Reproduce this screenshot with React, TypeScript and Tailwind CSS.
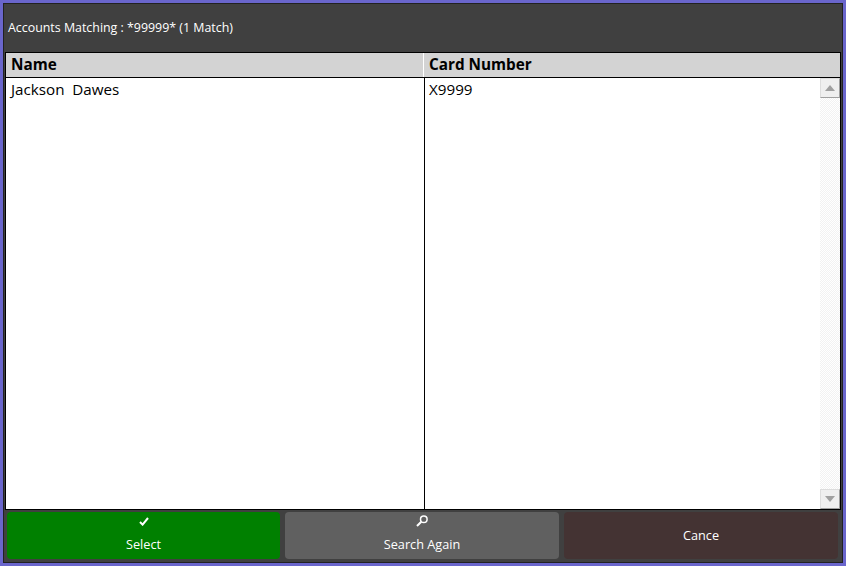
import * as React from "react";

const FooterButton = ({ label, icon, className }: { label: string; icon?: React.ReactNode; className: string }) => (
  <button className={`h-[47px] rounded-[4px] text-[12.7px] leading-[16px] text-white flex flex-col items-center ${className}`}>
    {icon ? (
      <>
        <span className="h-[12px] mt-[3px] flex items-center justify-center">{icon}</span>
        <span className="mt-[9px]">{label}</span>
      </>
    ) : (
      <span className="mt-[15px]">{label}</span>
    )}
  </button>
);

const scrollButton = "h-[20px] bg-[#efefef] border border-[#dddddd] border-r-[#a0a0a0] border-b-[#a0a0a0] flex items-center justify-center";

const App = () => {
  return (
    <div className="w-[846px] h-[566px] border-[3px] border-[#6a66cc] font-['Open_Sans','Noto_Sans',sans-serif] overflow-hidden">
      <div className="h-full border border-[#222222] bg-[#404040] flex flex-col">
        <div className="h-[48px] flex items-center pl-[4px] text-[12.4px] text-white shrink-0">
          Accounts Matching : *99999* (1 Match)
        </div>
        <div className="mx-[1px] flex-1 border border-black bg-white flex flex-col min-h-0">
          <div className="h-[25px] shrink-0 flex bg-[#d3d3d3] border-b border-black text-[15.3px] font-bold text-black">
            <div className="w-[418px] border-r border-white pl-[5px] leading-[23px]">Name</div>
            <div className="flex-1 pl-[5px] leading-[23px]">Card Number</div>
          </div>
          <div className="flex-1 flex min-h-0 text-[15.2px] text-black">
            <div className="w-[419px] border-r border-black pl-[5px] leading-[22px] whitespace-pre">Jackson  Dawes</div>
            <div className="flex-1 pl-[4px] leading-[22px]">X9999</div>
            <div className="w-[20px] shrink-0 flex flex-col justify-between bg-[repeating-conic-gradient(#f2f2f2_0_25%,#ffffff_0_50%)] bg-[length:2px_2px]">
              <div className={scrollButton}>
                <svg width="10" height="6" viewBox="0 0 10 6"><path d="M5 0 L10 6 L0 6 Z" fill="#a0a0a0" /></svg>
              </div>
              <div className={scrollButton}>
                <svg width="10" height="6" viewBox="0 0 10 6"><path d="M0 0 L10 0 L5 6 Z" fill="#a0a0a0" /></svg>
              </div>
            </div>
          </div>
        </div>
        <div className="h-[52px] shrink-0 flex gap-[5px] pl-[3px] pr-[4px] pt-[2px]">
          <FooterButton
            label="Select"
            className="w-[273px] shrink-0 bg-[#008000]"
            icon={<svg width="10" height="9" viewBox="0 0 10 9"><path d="M1 5 L3.6 7.6 L9 1" fill="none" stroke="#fff" strokeWidth="2" /></svg>}
          />
          <FooterButton
            label="Search Again"
            className="flex-1 bg-[#606060]"
            icon={<svg width="12" height="12" viewBox="0 0 12 12"><circle cx="7.8" cy="4.2" r="3.3" fill="none" stroke="#fff" strokeWidth="1.5" /><path d="M5.3 6.7 L1 11" stroke="#fff" strokeWidth="2" /></svg>}
          />
          <FooterButton label="Cance" className="flex-1 bg-[#443333]" />
        </div>
      </div>
    </div>
  );
};

export default App;
